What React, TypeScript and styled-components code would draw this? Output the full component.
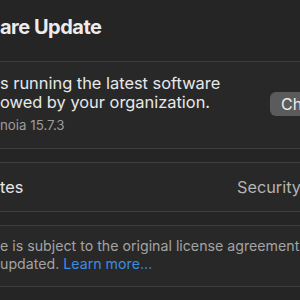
import React from "react";
import styled, { createGlobalStyle } from "styled-components";

const GlobalStyle = createGlobalStyle`
  html, body {
    margin: 0;
    padding: 0;
    background: #252525;
  }
  body {
    font-family: Inter, "Noto Sans", "Liberation Sans", sans-serif;
    -webkit-font-smoothing: antialiased;
  }
`;

const App: React.FC = () => {
  return (
    <>
      <GlobalStyle />
      <StyledWindow>
        <StyledHeader>
          <StyledTitle>are Update</StyledTitle>
        </StyledHeader>

        <StyledGroup>
          <StyledStatusRow>
            <StyledStatusText>
              <StyledMessage>
                s running the latest software
                <br />
                owed by your organization.
              </StyledMessage>
              <StyledVersion>noia 15.7.3</StyledVersion>
            </StyledStatusText>
            <StyledButton>Check Now</StyledButton>
          </StyledStatusRow>
        </StyledGroup>

        <StyledGroup>
          <StyledRow>
            <StyledLabel>tes</StyledLabel>
            <StyledValue>Security Responses &amp; System Files</StyledValue>
          </StyledRow>
        </StyledGroup>

        <StyledGroup>
          <StyledNote>
            e is subject to the original license agreement
            <br />
            updated. <StyledLink href="#">Learn more…</StyledLink>
          </StyledNote>
        </StyledGroup>
      </StyledWindow>
    </>
  );
};

const StyledWindow = styled.div`
  width: 300px;
  height: 300px;
  overflow: hidden;
  background: #252525;
  display: flex;
  flex-direction: column;
  gap: 13px;
`;

const StyledHeader = styled.div`
  height: 61px;
  flex-shrink: 0;
  margin-bottom: -13px;
  display: flex;
  align-items: flex-start;
`;

const StyledTitle = styled.h1`
  margin: 15px 0 0;
  font-size: 20px;
  line-height: 24px;
  font-weight: 700;
  letter-spacing: -0.5px;
  color: #ececec;
  white-space: nowrap;
`;

const StyledGroup = styled.div`
  flex-shrink: 0;
  background: #282828;
  border-top: 1px solid #3e3e3e;
  border-bottom: 1px solid #3e3e3e;
`;

const StyledStatusRow = styled.div`
  display: flex;
  align-items: center;
  justify-content: space-between;
  padding: 12px 0 15px;
`;

const StyledStatusText = styled.div`
  display: flex;
  flex-direction: column;
  gap: 5px;
`;

const StyledMessage = styled.div`
  font-size: 16.4px;
  line-height: 19px;
  color: #e8e8e8;
  white-space: nowrap;
`;

const StyledVersion = styled.div`
  font-size: 13.3px;
  line-height: 16px;
  color: #9c9c9c;
`;

const StyledButton = styled.button`
  flex-shrink: 0;
  height: 24px;
  width: 110px;
  margin-right: -80px;
  padding: 0 0 0 11px;
  border: none;
  border-radius: 6px;
  background: #5b5b5b;
  color: #ececec;
  font-family: inherit;
  font-size: 16px;
  text-align: left;
  white-space: nowrap;
  overflow: hidden;
`;

const StyledRow = styled.div`
  height: 48px;
  display: flex;
  align-items: center;
  justify-content: space-between;
  white-space: nowrap;
`;

const StyledLabel = styled.span`
  font-size: 16.3px;
  color: #e8e8e8;
`;

const StyledValue = styled.span`
  font-size: 16.3px;
  color: #b4b4b4;
  width: 63px;
  overflow: hidden;
`;

const StyledNote = styled.p`
  margin: 0;
  padding: 11px 0 13px;
  font-size: 14.2px;
  line-height: 18px;
  color: #a3a3a3;
  white-space: nowrap;
`;

const StyledLink = styled.a`
  color: #3a8ce4;
  text-decoration: none;
`;

export default App;
